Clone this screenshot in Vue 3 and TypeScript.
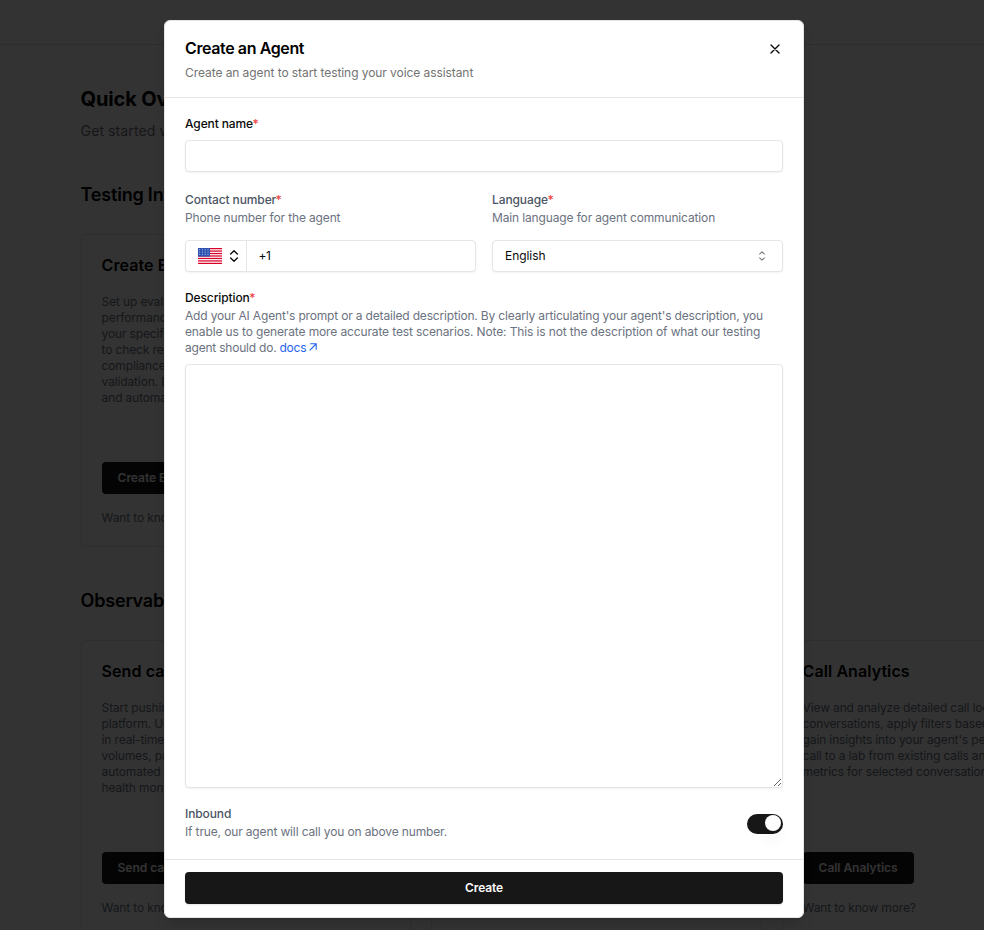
<script setup lang="ts">
import { ref } from 'vue'

interface OverviewCard {
  title: string
  lines: string[]
  action: string
}

interface Section {
  title: string
  cards: OverviewCard[]
}

const sections: Section[] = [
  {
    title: 'Testing Infrastructure',
    cards: [
      {
        title: 'Create Evaluators',
        lines: [
          'Set up evaluators to test agent',
          'performance against',
          'your specific needs',
          'to check responses,',
          'compliance and data',
          'validation. Design',
          'and automate tests.',
        ],
        action: 'Create Evaluators',
      },
    ],
  },
  {
    title: 'Observability',
    cards: [
      {
        title: 'Send calls',
        lines: [
          'Start pushing calls to the',
          'platform. Use metrics',
          'in real-time to track',
          'volumes, patterns and',
          'automated alerts with',
          'health monitoring.',
        ],
        action: 'Send calls',
      },
      {
        title: 'Metrics',
        lines: ['Define metrics for calls.'],
        action: 'Metrics',
      },
      {
        title: 'Call Analytics',
        lines: [
          'View and analyze detailed call logs and',
          'conversations, apply filters based on and',
          "gain insights into your agent's performance",
          'call to a lab from existing calls and run',
          'metrics for selected conversations.',
        ],
        action: 'Call Analytics',
      },
    ],
  },
]

const agentName = ref('')
const phone = ref('+1')
const description = ref('')
const inbound = ref(true)
const stripes = [0, 1, 2, 3, 4, 5, 6]
const starRows = [1.8, 4, 6.2]
const starCols = [1.6, 4.4, 7.2, 10]
</script>

<template>
  <div class="screen">
    <div class="page">
      <div class="topbar"></div>
      <main class="overview">
        <h1>Quick Overview</h1>
        <p class="intro">Get started with testing</p>
        <section v-for="s in sections" :key="s.title">
          <h2>{{ s.title }}</h2>
          <div class="cards">
            <article v-for="c in s.cards" :key="c.title" class="card">
              <h3>{{ c.title }}</h3>
              <div class="copy">
                <div v-for="l in c.lines" :key="l">{{ l }}</div>
              </div>
              <button class="action">{{ c.action }}</button>
              <div class="more">Want to know more?</div>
            </article>
          </div>
        </section>
      </main>
    </div>

    <div class="overlay">
      <div class="dialog">
        <header class="head">
          <div>
            <div class="title">Create an Agent</div>
            <div class="subtitle">Create an agent to start testing your voice assistant</div>
          </div>
          <svg class="close" width="16" height="16" viewBox="0 0 24 24" fill="none" stroke="currentColor" stroke-width="2" stroke-linecap="round" stroke-linejoin="round">
            <path d="M18 6 6 18M6 6l12 12" />
          </svg>
        </header>

        <div class="body">
          <div class="label dark">Agent name<span class="req">*</span></div>
          <input v-model="agentName" class="box name" />

          <div class="pair">
            <div class="contact">
              <div class="label">Contact number<span class="req">*</span></div>
              <div class="hint">Phone number for the agent</div>
              <div class="box phone">
                <div class="country">
                  <svg width="24" height="16" viewBox="0 0 24 16">
                    <rect width="24" height="16" fill="#fff" />
                    <rect v-for="i in stripes" :key="i" y="0" :transform="`translate(0 ${i * 2.46})`" width="24" height="1.24" fill="#d80027" />
                    <rect width="12" height="8.6" fill="#2e52b2" />
                    <g fill="#c5d0ee">
                      <template v-for="y in starRows" :key="y">
                        <circle v-for="x in starCols" :key="x" :cx="x" :cy="y" r="0.55" />
                      </template>
                    </g>
                  </svg>
                  <svg width="16" height="16" viewBox="0 0 24 24" fill="none" stroke="currentColor" stroke-width="2" stroke-linecap="round" stroke-linejoin="round">
                    <path d="m7 15 5 5 5-5M7 9l5-5 5 5" />
                  </svg>
                </div>
                <input v-model="phone" class="number" />
              </div>
            </div>
            <div class="language">
              <div class="label">Language<span class="req">*</span></div>
              <div class="hint">Main language for agent communication</div>
              <div class="box select">
                <span>English</span>
                <svg width="16" height="16" viewBox="0 0 15 15" fill="currentColor">
                  <path fill-rule="evenodd" clip-rule="evenodd" d="M4.93179 5.43179C4.75605 5.60753 4.75605 5.89245 4.93179 6.06819C5.10753 6.24392 5.39245 6.24392 5.56819 6.06819L7.49999 4.13638L9.43179 6.06819C9.60753 6.24392 9.89245 6.24392 10.0682 6.06819C10.2439 5.89245 10.2439 5.60753 10.0682 5.43179L7.81819 3.18179C7.73379 3.0974 7.61933 3.04999 7.49999 3.04999C7.38064 3.04999 7.26618 3.0974 7.18179 3.18179L4.93179 5.43179ZM10.0682 9.56819C10.2439 9.39245 10.2439 9.10753 10.0682 8.93179C9.89245 8.75606 9.60753 8.75606 9.43179 8.93179L7.49999 10.8636L5.56819 8.93179C5.39245 8.75606 5.10753 8.75606 4.93179 8.93179C4.75605 9.10753 4.75605 9.39245 4.93179 9.56819L7.18179 11.8182C7.35753 11.9939 7.64245 11.9939 7.81819 11.8182L10.0682 9.56819Z" />
                </svg>
              </div>
            </div>
          </div>

          <div class="label dark">Description<span class="req">*</span></div>
          <div class="hint long">
            <div class="first">Add your AI Agent's prompt or a detailed description. By clearly articulating your agent's description, you</div>
            <div class="second">enable us to generate more accurate test scenarios. Note: This is not the description of what our testing</div>
            <div class="last">
              <span>agent should do.</span>
              <a class="docs">docs
                <svg width="8" height="8" viewBox="0 0 8 8" fill="none" stroke="currentColor" stroke-width="1.1"><path d="M0.7 7.3 7 1M1.2 0.8h6v6" /></svg>
              </a>
            </div>
          </div>
          <textarea v-model="description" class="box area"></textarea>

          <div class="inbound">
            <div>
              <div class="label">Inbound</div>
              <div class="hint">If true, our agent will call you on above number.</div>
            </div>
            <div class="switch" :class="{ on: inbound }" @click="inbound = !inbound"><span class="thumb"></span></div>
          </div>
        </div>

        <footer class="foot">
          <button class="create">Create</button>
        </footer>
      </div>
    </div>
  </div>
</template>

<style>
body {
  overflow: hidden;
}
</style>

<style scoped>
.screen,
.screen * {
  box-sizing: border-box;
}
.screen {
  position: relative;
  width: 984px;
  height: 930px;
  overflow: hidden;
  background: #fff;
  font-family: Inter, "Liberation Sans", sans-serif;
  font-size: 12px;
  line-height: 16px;
  letter-spacing: -0.14px;
  white-space: nowrap;
  color: #0a0a0a;
}
input,
textarea,
button {
  font: inherit;
  letter-spacing: inherit;
  color: inherit;
  outline: none;
}
.topbar {
  height: 45px;
  border-bottom: 1px solid #e5e7eb;
}
.overview {
  width: 1112.5px;
  padding: 40px 0 0 80.6px;
}
h1,
h2,
h3,
p {
  margin: 0;
}
h1 {
  font-size: 20px;
  line-height: 28px;
  font-weight: 700;
  color: #000;
}
.intro {
  margin-top: 8px;
  font-size: 14px;
  line-height: 20px;
  letter-spacing: 0.1px;
  color: #71717a;
}
section {
  margin-top: 40px;
}
h2 {
  font-size: 18px;
  line-height: 28px;
  font-weight: 600;
  letter-spacing: -0.2px;
  color: #000;
}
.cards {
  display: grid;
  grid-template-columns: repeat(3, 330.5px);
  gap: 20px;
  margin-top: 25px;
}
.card {
  display: flex;
  flex-direction: column;
  align-items: flex-start;
  padding: 20px;
  border: 1px solid #e5e7eb;
  border-radius: 4px;
}
h3 {
  font-size: 16px;
  line-height: 20px;
  font-weight: 600;
  letter-spacing: 0.08px;
  color: #000;
}
.copy {
  margin-top: 19px;
  margin-bottom: 56px;
  color: #6b7280;
}
.action {
  height: 32px;
  margin-top: auto;
  padding: 0 16px;
  border: 0;
  border-radius: 4px;
  background: #171717;
  color: #fafafa;
  font-weight: 600;
  letter-spacing: -0.04px;
}
.more {
  margin-top: 16px;
  color: #6b7280;
}
.overlay {
  position: absolute;
  inset: 0;
  padding: 20px 0 0 164px;
  background: rgba(0, 0, 0, 0.8);
}
.dialog {
  display: flex;
  flex-direction: column;
  width: 640px;
  height: 898px;
  border: 1px solid #e5e5e5;
  border-radius: 6px;
  background: #fff;
  box-shadow: 0 10px 15px -3px rgba(0, 0, 0, 0.1), 0 4px 6px -4px rgba(0, 0, 0, 0.1);
}
.head {
  display: flex;
  justify-content: space-between;
  height: 77px;
  padding: 15px 20px 0;
  border-bottom: 1px solid #e5e5e5;
}
.title {
  font-size: 16px;
  line-height: 24px;
  font-weight: 600;
  letter-spacing: -0.39px;
  color: #000;
}
.subtitle {
  margin-top: 5px;
  letter-spacing: -0.07px;
  color: #737373;
}
.close {
  margin-top: 5px;
}
.body {
  flex: 1;
  padding: 18px 20px 0;
}
.label {
  font-weight: 500;
  letter-spacing: -0.11px;
  color: #4b5563;
}
.label.dark {
  color: #0a0a0a;
}
.req {
  margin-left: -0.5px;
  color: #ef4444;
}
.hint {
  margin-top: 2px;
  color: #6b7280;
}
.first {
  letter-spacing: -0.172px;
}
.second {
  letter-spacing: -0.13px;
}
.last {
  display: flex;
  gap: 3px;
  letter-spacing: -0.21px;
}
.docs {
  color: #2563eb;
}
.docs svg {
  margin-left: -0.5px;
  vertical-align: 1.5px;
}
.box {
  display: flex;
  align-items: center;
  width: 100%;
  height: 32px;
  border: 1px solid #e5e5e5;
  border-radius: 4px;
  background: #fff;
  box-shadow: 0 1px 2px rgba(0, 0, 0, 0.05);
}
.name {
  margin-top: 8px;
  padding: 0 12px;
}
.pair {
  display: flex;
  gap: 16px;
  margin: 20px 0 18px;
}
.contact,
.language {
  flex: 1;
}
.pair .box {
  margin-top: 14px;
}
.country {
  display: flex;
  align-items: center;
  justify-content: space-between;
  width: 61px;
  height: 100%;
  padding: 0 4px 0 12px;
  border-right: 1px solid #e5e5e5;
}
.number {
  flex: 1;
  min-width: 0;
  height: 30px;
  padding: 0 12px 1px 11.5px;
  border: 0;
  background: transparent;
  letter-spacing: -0.5px;
}
.select {
  justify-content: space-between;
  padding: 0 12px;
}
.select span {
  letter-spacing: -0.06px;
}
.select svg {
  opacity: 0.6;
}
.area {
  display: block;
  height: 424px;
  margin-top: 8px;
  resize: vertical;
}
.inbound {
  display: flex;
  align-items: center;
  justify-content: space-between;
  margin-top: 18px;
}
.switch {
  display: flex;
  width: 36px;
  height: 20px;
  margin-top: 2px;
  padding: 1px 2px;
  border-radius: 10px;
  background: #d4d4d4;
}
.switch.on {
  justify-content: flex-end;
  background: #171717;
}
.thumb {
  width: 16px;
  height: 16px;
  border-radius: 50%;
  background: #fff;
  box-shadow: 0 10px 15px -3px rgba(0, 0, 0, 0.1);
}
.foot {
  height: 58px;
  padding: 12px 20px;
  border-top: 1px solid #e5e5e5;
}
.create {
  width: 100%;
  height: 32px;
  border: 0;
  border-radius: 4px;
  background: #171717;
  color: #fafafa;
  font-weight: 600;
  box-shadow: 0 1px 2px rgba(0, 0, 0, 0.1);
}
</style>
